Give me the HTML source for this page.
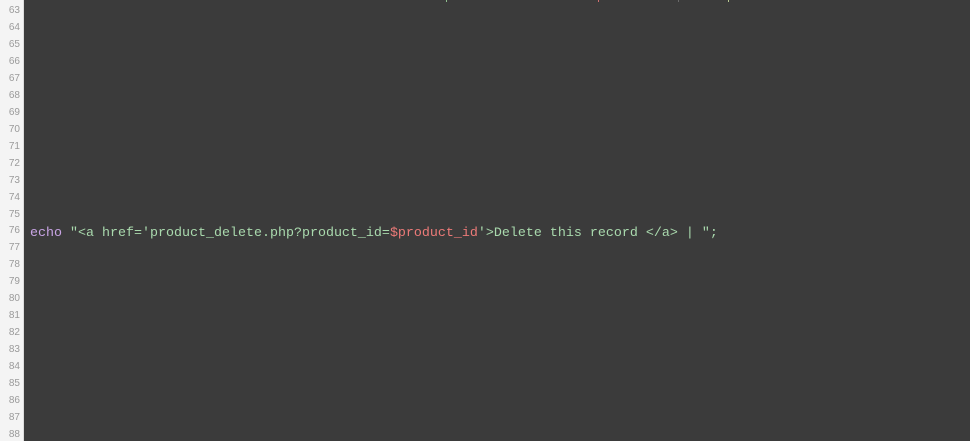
<!DOCTYPE html>
<html><head><meta charset="utf-8"><style>
html,body{margin:0;padding:0;width:970px;height:441px;overflow:hidden;background:#3b3b3b;}
.g{position:absolute;left:0;top:0;width:23px;height:441px;background:#f4f4f4;border-right:1px solid #dcdcdc;}
.n{position:absolute;right:3px;font:10px "Liberation Sans",sans-serif;color:#9a9a9a;}
.code{position:absolute;left:30px;top:225px;font:13.33px/18px "Liberation Mono",monospace;color:#a9d9ad;white-space:pre;}
.k{color:#c8a4e4}.v{color:#ec7a78}
.t{position:absolute;top:0;width:1px;height:2px;}
</style></head><body>
<div class="g" id="g"></div>
<div class="t" style="left:446px;background:#8fc08f"></div>
<div class="t" style="left:598px;background:#d07070"></div>
<div class="t" style="left:678px;background:#6a6a6a"></div>
<div class="t" style="left:728px;background:#b8c890"></div>
<div class="code"><span class="k">echo</span> "&lt;a href='product_delete.php?product_id=<span class="v">$product_id</span>'&gt;Delete this record &lt;/a&gt; | ";</div>
<script>
var g=document.getElementById('g');
for(var i=63;i<=88;i++){var d=document.createElement('div');d.className='n';d.textContent=i;d.style.top=(5+(i-63)*16.96)+'px';g.appendChild(d);}
</script>
</body></html>
